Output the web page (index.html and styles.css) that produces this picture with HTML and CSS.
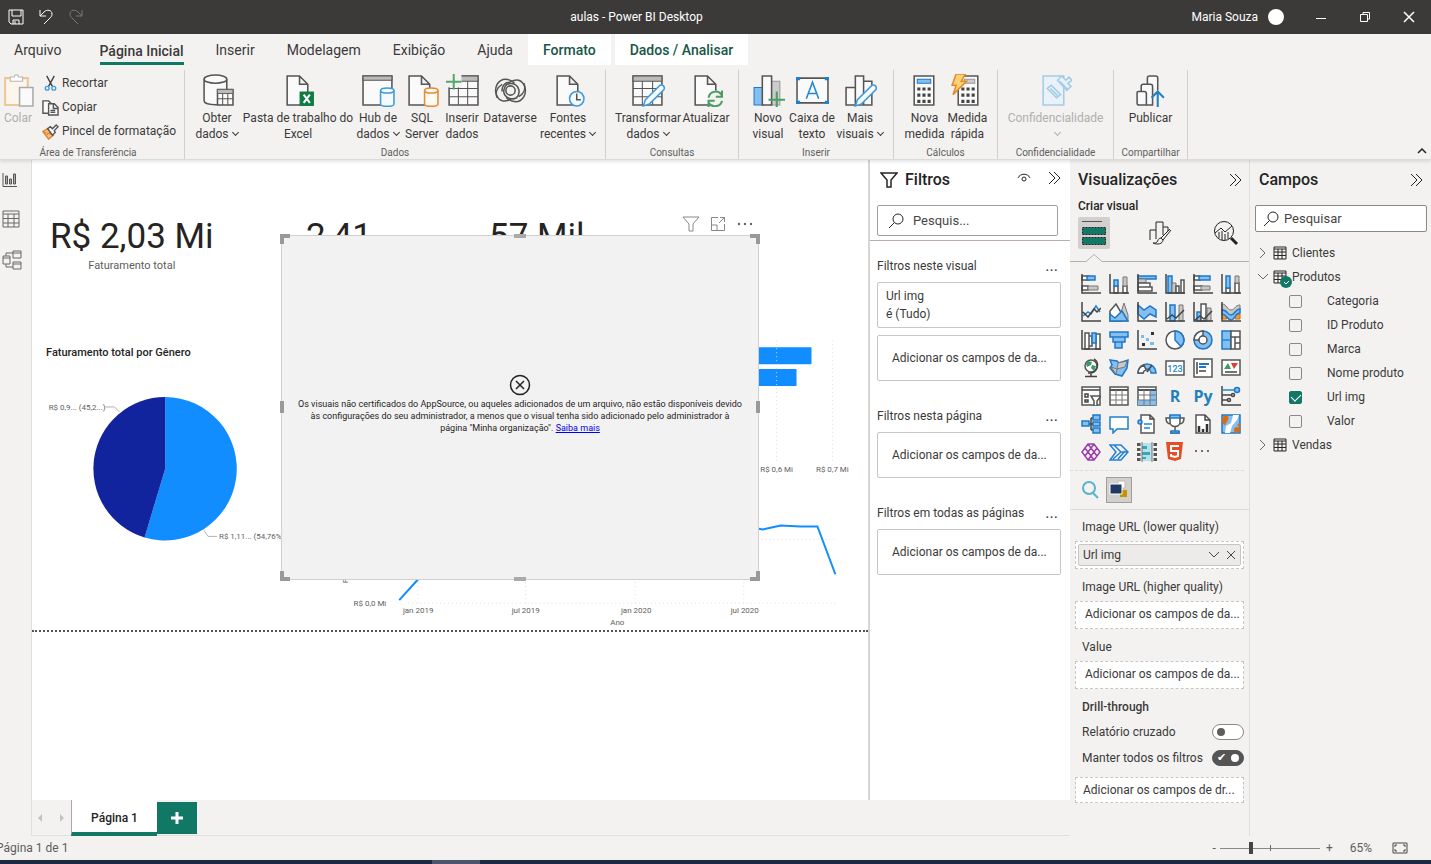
FILE: index.html
```html
<!DOCTYPE html>
<html lang="pt-BR">
<head>
<meta charset="utf-8">
<title>aulas - Power BI Desktop</title>
<link rel="stylesheet" href="styles.css">
</head>
<body>
<div class="app">
  <header class="titlebar">
    <div class="quick">
      <button class="plain" aria-label="Salvar"><svg width="16" height="16" viewBox="0 0 16 16" class="line light"><path d="M1 1h14v14H3l-2-2zM4 1v6h9V1M5 15v-4h6v4M7 12v3"/></svg></button>
      <button class="plain" aria-label="Desfazer"><svg width="16" height="16" viewBox="0 0 16 16" class="line light"><path d="M2 1v6h6M2 7l4-4c3-3 8-2 8 2 0 2-1 3-2 4l-6 6"/></svg></button>
      <button class="plain" aria-label="Refazer"><svg width="16" height="16" viewBox="0 0 16 16" class="line dim"><path d="M14 1v6H8M14 7l-4-4C7 0 2 1 2 5c0 2 1 3 2 4l6 6"/></svg></button>
    </div>
    <h1 class="doc-title">aulas - Power BI Desktop</h1>
    <div class="account">
      <span>Maria Souza</span><span class="avatar"></span>
      <button class="plain" aria-label="Minimizar"><svg width="12" height="12" viewBox="0 0 12 12" class="line light"><path d="M1 7.500h10"/></svg></button>
      <button class="plain" aria-label="Restaurar"><svg width="12" height="12" viewBox="0 0 12 12" class="line light"><path d="M1.500 3.500h7v7h-7zM4 3.500v-2h6.500v6.500h-2"/></svg></button>
      <button class="plain" aria-label="Fechar"><svg width="12" height="12" viewBox="0 0 12 12" class="line light"><path d="M1 1l10 10M11 1L1 11" stroke-width="1.500"/></svg></button>
    </div>
  </header>

  <nav class="tabs">
    <button class="tab">Arquivo</button>
    <button class="tab current"><span>Página Inicial</span></button>
    <button class="tab">Inserir</button>
    <button class="tab">Modelagem</button>
    <button class="tab">Exibição</button>
    <button class="tab">Ajuda</button>
    <button class="tab context format">Formato</button>
    <button class="tab context data">Dados / Analisar</button>
  </nav>

  <section class="ribbon">
    <div class="group clip">
      <div class="tools">
        <button class="tool off"><svg viewBox="0 0 32 32"><path d="M3 4h22v26H3z" fill="#fdf6ec" stroke="#edc896" stroke-width="2"/><path d="M8 7V3h4c0-3 4-3 4 0h4v4z" fill="#fff" stroke="#b5b5b5"/><path d="M17 13h13v18H17z" fill="#fafafa" stroke="#aaa" stroke-width="1.500"/></svg><span>Colar</span></button>
        <div class="small-tools">
          <button><svg viewBox="0 0 18 18"><path d="M5 1l6 11M13 1L7 12" stroke="#444" fill="none" stroke-width="1.500"/><circle cx="5.500" cy="14" r="2" class="bl"/><circle cx="12.500" cy="14" r="2" class="bl"/></svg>Recortar</button>
          <button><svg viewBox="0 0 18 18"><path d="M7 15H1V2h6l3 3M7 5h6l4 4v8H7zM12 5v5h5M9 12h5M9 14h5" class="ol"/></svg>Copiar</button>
          <button><svg viewBox="0 0 18 18"><path d="M1 9l6 8 5-4-6-7z" fill="#f6bd78" stroke="#e08124" stroke-width="1.500"/><path d="M2 10l9 2M5 13l4-4" stroke="#e08124"/><path d="M6 6l3-2 2 2 4-4 2 2-4 4 1 2-3 3z" class="ol"/></svg>Pincel de formatação</button>
        </div>
      </div>
      <h2>Área de Transferência</h2>
    </div>
    <div class="group dados">
      <div class="tools">
        <button class="tool"><svg viewBox="0 0 32 32"><path d="M3 5v21c0 5 22 5 22 0V5" class="ol"/><ellipse cx="14" cy="5" rx="11" ry="4" class="ol"/><path d="M16 15h15v15H16z" class="ol"/><path d="M16 15h15v4H16z" fill="#bbb" stroke="#666"/><path d="M16 24h15M21 19v11M26 19v11" class="ol thin"/></svg><span>Obter<br>dados<i class="chev"></i></span></button>
        <button class="tool"><svg viewBox="0 0 32 32"><path d="M5 2h12l8 8v20H5zM17 2v8h8" class="ol"/><path d="M17 17h14v14H17z" fill="#107c41"/><path d="M21 20l6 8M27 20l-6 8" stroke="#fff" stroke-width="2"/></svg><span>Pasta de trabalho do<br>Excel</span></button>
        <button class="tool"><svg viewBox="0 0 32 32"><path d="M1 2h28v28H1z" class="ol"/><path d="M1 2h28v4H1z" fill="#bbb" stroke="#555"/><path d="M18 16v13c0 3 13 3 13 0V16" class="bl"/><ellipse cx="24.500" cy="16" rx="6.500" ry="2.500" class="bl"/></svg><span>Hub de<br>dados<i class="chev"></i></span></button>
        <button class="tool"><svg viewBox="0 0 32 32"><path d="M3 2h12l8 8v20H3zM15 2v8h8" class="ol"/><path d="M18 16v13c0 3 13 3 13 0V16" class="or"/><ellipse cx="24.500" cy="16" rx="6.500" ry="2.500" class="or"/></svg><span>SQL<br>Server</span></button>
        <button class="tool"><svg viewBox="0 0 32 32"><path d="M3 2h28v28H3z" class="ol"/><path d="M3 2h28v5H3z" fill="#bbb" stroke="#555"/><path d="M3 14h28M3 22h28M12 7v23M21 7v23" class="ol thin"/><path d="M0 0h15v13H0z" fill="#f3f2f1"/><path d="M7.500 0v15M0 7.500h15" stroke="#55a86c" stroke-width="2"/></svg><span>Inserir<br>dados</span></button>
        <button class="tool"><svg viewBox="0 0 32 32" fill="none" stroke="#555" stroke-width="1.500"><path d="M20 9C15 4 7 3 3 10c-3 6-1 14 5 16 4 1 7-1 9-2 6 1 8-5 7-9-2-7-12-8-14-1-2 5 2 10 7 10"/><path d="M12 23c5 5 13 6 17-1 3-6 1-14-5-16-4-1-7 1-9 2-5 0-8 5-7 9"/><circle cx="16" cy="16" r="4.500"/><path d="M29 9c2 5 0 10-5 13M3 23c-2-5 0-10 5-13"/></svg><span>Dataverse</span></button>
        <button class="tool"><svg viewBox="0 0 32 32"><path d="M5 2h12l8 8v20H5zM17 2v8h8" class="ol"/><circle cx="24" cy="24" r="7" class="bl"/><path d="M24 19v6h4" class="ol"/></svg><span>Fontes<br>recentes<i class="chev"></i></span></button>
      </div>
      <h2>Dados</h2>
    </div>
    <div class="group consultas">
      <div class="tools">
        <button class="tool"><svg viewBox="0 0 32 32"><path d="M1 2h28v28H1z" class="ol"/><path d="M1 2h28v5H1z" fill="#bbb" stroke="#555"/><path d="M1 14h28M1 22h28M10 7v23M20 7v23" class="ol thin"/><path d="M11 31l2-6 14-14c3-1 5 1 4 4L17 29z" class="bl"/></svg><span>Transformar<br>dados<i class="chev"></i></span></button>
        <button class="tool"><svg viewBox="0 0 32 32"><path d="M5 2h12l8 8v20H5zM17 2v8h8" class="ol"/><circle cx="25" cy="24" r="8" fill="#f3f2f1"/><path d="M18 23c1-7 10-8 13-2M31 16v6h-6M31 26c-1 6-10 7-13 2M18 32v-6h6" fill="none" stroke="#4b9e61" stroke-width="2"/></svg><span>Atualizar</span></button>
      </div>
      <h2>Consultas</h2>
    </div>
    <div class="group inserir">
      <div class="tools">
        <button class="tool"><svg viewBox="0 0 32 32"><path d="M2 13h9v17H2z" class="bf"/><path d="M18 7h9v23h-9z" fill="#ccc" stroke="#999"/><path d="M10 2h9v28h-9z" class="ol"/><path d="M16 25h16M24 17v15" stroke="#4b9e61" stroke-width="2"/></svg><span>Novo<br>visual</span></button>
        <button class="tool"><svg viewBox="0 0 32 32"><path d="M1 4h30v24H1z" class="ol"/><path d="M0 3h4v3H0zM28 3h4v3h-4zM0 26h4v3H0zM28 26h4v3h-4z" fill="#1683cf"/><path d="M10 24l6-16 6 16M12 19h8" fill="none" stroke="#2189d2" stroke-width="1.500"/></svg><span>Caixa de<br>texto</span></button>
        <button class="tool"><svg viewBox="0 0 32 32"><path d="M2 13h9v17H2zM19 7h8v23h-8zM11 2h8v28h-8z" class="ol"/><path d="M11 31l2-6 14-14c3-1 5 1 4 4L17 29z" class="bl"/></svg><span>Mais<br>visuais<i class="chev"></i></span></button>
      </div>
      <h2>Inserir</h2>
    </div>
    <div class="group calculos">
      <div class="tools">
        <button class="tool"><svg viewBox="0 0 32 32"><path d="M6 2h19v28H6z" class="ol"/><path d="M9 5h13v4H9z" class="bf"/><path d="M9 14.500h13M9 20.500h13M9 26.500h13" stroke="#444" stroke-width="3" stroke-dasharray="3 2"/></svg><span>Nova<br>medida</span></button>
        <button class="tool"><svg viewBox="0 0 32 32"><path d="M7 2h19v28H7z" class="ol"/><path d="M13 5h10v4H13z" fill="#ccc" stroke="#999"/><path d="M10 14.500h13M10 20.500h13M10 26.500h13" stroke="#444" stroke-width="3" stroke-dasharray="3 2"/><path d="M5 0h9l-4 7h5L2 20l3-9H1z" fill="#fbd277" stroke="#e48a26" stroke-width="1.500"/></svg><span>Medida<br>rápida</span></button>
      </div>
      <h2>Cálculos</h2>
    </div>
    <div class="group confid">
      <div class="tools">
        <button class="tool off"><svg viewBox="0 0 32 32" fill="#e9f2f8" stroke="#a4cce4" stroke-width="1.500"><path d="M4 2h20v28H4z"/><path d="M8 14l4-3 9 9-4 3zM11 14l7 7M18 6l4-4 4 4 3-3 3 3-4 3 3 3-4 4zM20 7l8 8"/></svg><span>Confidencialidade<br><i class="chev"></i></span></button>
      </div>
      <h2>Confidencialidade</h2>
    </div>
    <div class="group compart">
      <div class="tools">
        <button class="tool"><svg viewBox="0 0 32 32"><path d="M3 18q0-1 1-1h6q2 0 2 2v11H5q-2 0-2-2zM7 17v-5q0-2 2-2h7q2 0 2 2v18h-6M13 10V4q0-2 2-2h6q2 0 2 2v12" class="ol"/><path d="M23 32V17M17 23l6-6 6 6" fill="none" stroke="#2380bd" stroke-width="2"/></svg><span>Publicar</span></button>
      </div>
      <h2>Compartilhar</h2>
    </div>
    <button class="plain collapse" aria-label="Recolher faixa de opções"><svg width="10" height="6" viewBox="0 0 10 6" class="line dark"><path d="M1 5l4-4 4 4" stroke-width="1.500"/></svg></button>
  </section>

  <main class="work">
    <nav class="rail">
      <button class="plain" aria-label="Relatório"><svg width="16" height="16" viewBox="0 0 16 16" fill="#aaa" stroke="#555"><path d="M1 1v13.500h14" fill="none"/><path d="M3.500 4h2v8h-2zM7.500 7h2v5h-2zM11.500 2h2v10h-2z"/></svg></button>
      <button class="plain" aria-label="Dados"><svg width="18" height="18" viewBox="0 0 18 18" class="line gray"><path d="M1 1h16v16H1zM1 4h16M1 8.500h16M1 13h16M6 4v13M12 4v13"/></svg></button>
      <button class="plain" aria-label="Modelo"><svg width="20" height="20" viewBox="0 0 20 20" class="line gray"><path d="M11 1h8v7h-8zM11 3h8M11 12h8v7h-8zM11 14h8M1 6h7v8H1zM1 8h7M4 6V3h7M4 14v3h7"/></svg></button>
    </nav>

    <div class="report">
      <div class="canvas">
        <div class="card revenue"><strong>R$ 2,03 Mi</strong><span>Faturamento total</span></div>
        <div class="card average"><strong>2,41</strong></div>
        <div class="card units"><strong>57 Mil</strong></div>
        <h3 class="chart-title">Faturamento total por Gênero</h3>
        <svg class="charts" width="836" height="472" viewBox="0 -1 836 472">
          <path d="M132 237a72 72 0 1 1-20.700 141L132 309z" fill="#118dff"/>
          <path d="M111.300 378A72 72 0 0 1 132 237v72z" fill="#12239e"/>
          <path d="M72 247h9l5 5M171 371l4 6h9" class="leader"/>
          <text x="15" y="250">R$ 0,9... (45,2...)</text>
          <text x="186" y="380">R$ 1,11... (54,76%)</text>
          <path d="M726 187h55v17h-55zM726 209h40v17h-40z" fill="#118dff"/>
          <path d="M746 180v123M802 180v123M376 444h432M386 419v26M494 419v26M604 419v26M713 419v26M727 380h80" class="dots"/>
          <text x="746" y="312" class="mid">R$ 0,6 Mi</text>
          <text x="802" y="312" class="mid">R$ 0,7 Mi</text>
          <path d="M367 441l19-21 7-2M727 369l5 1 18-4 20 1h17l18 48" fill="none" stroke="#118dff" stroke-width="2"/>
          <text x="354" y="447" class="end">R$ 0,0 Mi</text>
          <text x="386" y="454" class="mid">jan 2019</text>
          <text x="494" y="454" class="mid">jul 2019</text>
          <text x="605" y="454" class="mid">jan 2020</text>
          <text x="714" y="454" class="mid">jul 2020</text>
          <text x="586" y="466" class="mid">Ano</text>
          <text transform="translate(316 424) rotate(-90)">Faturamento total</text>
        </svg>
        <div class="visual-actions">
          <button class="plain" aria-label="Filtros"><svg width="18" height="18" viewBox="0 0 18 18" class="line mist"><path d="M1 2h16l-6 7v7H7V9z"/></svg></button>
          <button class="plain" aria-label="Modo de foco"><svg width="16" height="16" viewBox="0 0 16 16" class="line mist"><path d="M8 1.500H1.500v13h13V8M1.500 9H7v5.500M10 1.500h4.500V6M14.500 1.500L9 7"/></svg></button>
          <button class="plain" aria-label="Mais opções"><svg width="18" height="4" viewBox="0 0 18 4" fill="#666"><circle cx="3" cy="2" r="1.200"/><circle cx="9" cy="2" r="1.200"/><circle cx="15" cy="2" r="1.200"/></svg></button>
        </div>
        <div class="blocked">
          <i class="grip nw"></i><i class="grip n"></i><i class="grip ne"></i><i class="grip w"></i><i class="grip e"></i><i class="grip sw"></i><i class="grip s"></i><i class="grip se"></i>
          <svg width="22" height="22" viewBox="0 0 22 22" fill="none" stroke="#222" stroke-width="1.500"><circle cx="11" cy="11" r="9.500"/><path d="M7 7l8 8M15 7l-8 8"/></svg>
          <p>Os visuais não certificados do AppSource, ou aqueles adicionados de um arquivo, não estão disponíveis devido<br>às configurações do seu administrador, a menos que o visual tenha sido adicionado pelo administrador à<br>página "Minha organização". <a href="#">Saiba mais</a></p>
        </div>
      </div>

      <aside class="filters">
        <header><svg width="18" height="18" viewBox="0 0 18 18" fill="none" stroke="#252423" stroke-width="1.500"><path d="M1 2h16l-6 7v7H7V9z"/></svg><h2>Filtros</h2>
          <button class="plain eye" aria-label="Ocultar painel"><svg width="14" height="10" viewBox="0 0 14 10" class="line dark"><path d="M1 5c2-5 10-5 12 0"/><circle cx="7" cy="6" r="2"/></svg></button>
          <button class="plain" aria-label="Recolher filtros"><svg width="14" height="14" viewBox="0 0 14 14" class="line dark"><path d="M2 1l6 6-6 6M7 1l6 6-6 6"/></svg></button></header>
        <label class="search"><svg width="16" height="16" viewBox="0 0 16 16" class="line dark"><circle cx="10" cy="6" r="5"/><path d="M6.500 9.500L1 15"/></svg><input type="text" placeholder="Pesquis..." aria-label="Pesquisar filtros"></label>
        <hr>
        <section><h3>Filtros neste visual <button class="plain">...</button></h3>
          <div class="box named">Url img<br>é (Tudo)</div>
          <div class="box">Adicionar os campos de da...</div></section>
        <section><h3>Filtros nesta página <button class="plain">...</button></h3>
          <div class="box">Adicionar os campos de da...</div></section>
        <section><h3>Filtros em todas as páginas <button class="plain">...</button></h3>
          <div class="box">Adicionar os campos de da...</div></section>
      </aside>

      <footer class="pages">
        <button class="plain arrow" aria-label="Página anterior"><svg width="6" height="8" viewBox="0 0 6 8" fill="#c4c2c0"><path d="M5 0v8L1 4z"/></svg></button>
        <button class="plain arrow" aria-label="Próxima página"><svg width="6" height="8" viewBox="0 0 6 8" fill="#c4c2c0"><path d="M1 0v8l4-4z"/></svg></button>
        <button class="page">Página 1</button>
        <button class="add" aria-label="Nova página"><svg width="12" height="12" viewBox="0 0 12 12" stroke="#fff" stroke-width="3"><path d="M6 0v12M0 6h12"/></svg></button>
      </footer>
    </div>

    <aside class="visuals">
      <header><h2>Visualizações</h2><button class="plain" aria-label="Recolher visualizações"><svg width="14" height="14" viewBox="0 0 14 14" class="line dark"><path d="M2 1l6 6-6 6M7 1l6 6-6 6"/></svg></button></header>
      <h3 class="build">Criar visual</h3>
      <div class="modes">
        <button class="mode on" aria-label="Criar visual"><svg width="26" height="26" viewBox="0 0 26 26"><path d="M1 1.500h20" stroke="#555"/><path d="M1.500 7.500h23v7h-23zM1.500 17.500h23v7h-23z" fill="#117865" stroke="#222" stroke-dasharray="2 1"/></svg></button>
        <button class="mode" aria-label="Formatar visual"><svg width="24" height="24" viewBox="0 0 24 24" class="line dark"><path d="M2 19V9h6V1h7v13M8 9v9M15 6h5v4M22 8l-9 9M23 9l-8 10M13 17c-3 0-3 3-4 4-1 1-2 1-4 1 4 2 10 1 10-3z"/></svg></button>
        <button class="mode" aria-label="Análise"><svg width="26" height="26" viewBox="0 0 26 26" class="line dark"><circle cx="11" cy="11" r="9.500"/><path d="M2 13l6-5 4 4 7-6M6 12v6M9 11v9M12 14v6M15 12v7"/><path d="M18 18l6 6" stroke-width="3"/></svg></button>
      </div>
      <svg class="notch" width="180" height="10" viewBox="0 0 180 10" fill="none" stroke="#b3b0ad"><path d="M0 8.500h16l8-7 8 7h148"/></svg>
      <div class="gallery">
        <button><svg viewBox="0 0 20 20"><path d="M1 2h7v4H1zM1 12h6v4H1z" class="w"/><path d="M6 2h8v4H6z" class="b"/><path d="M7 12h10v4H7z" class="g"/><path d="M1 0v19h19" class="k"/></svg></button>
        <button><svg viewBox="0 0 20 20"><path d="M5 12h4v7H5zM14 12h4v7h-4z" class="w"/><path d="M5 6h4v6H5z" class="b"/><path d="M14 3h4v9h-4z" class="g"/><path d="M1 0v19h19" class="k"/></svg></button>
        <button><svg viewBox="0 0 20 20"><path d="M1 2h18v3H1z" class="b"/><path d="M1 5h8v4H1z" class="g"/><path d="M1 9h12v4H1zM1 13h14v4H1z" class="w"/><path d="M1 0v19h19" class="k"/></svg></button>
        <button><svg viewBox="0 0 20 20"><path d="M3 2h4v17H3z" class="b"/><path d="M7 9h4v10H7z" class="g"/><path d="M11 12h3v7h-3zM16 6h3v13h-3z" class="w"/><path d="M1 0v19h19" class="k"/></svg></button>
        <button><svg viewBox="0 0 20 20"><path d="M1 2h6v4H1zM1 12h8v4H1z" class="w"/><path d="M6 2h11v4H6z" class="b"/><path d="M8 12h9v4H8z" class="g"/><path d="M1 0v19h19" class="k"/></svg></button>
        <button><svg viewBox="0 0 20 20"><path d="M5 14h4v5H5zM14 9h4v10h-4z" class="w"/><path d="M5 2h4v12H5z" class="b"/><path d="M14 2h4v7h-4z" class="g"/><path d="M1 0v19h19" class="k"/></svg></button>

        <button><svg viewBox="0 0 20 20"><path d="M2 14l5-4 3 2 5-8 4 6" class="bs"/><path d="M2 10l5 5 6-8 3 3 4-4M1 0v19h19" class="k"/></svg></button>
        <button><svg viewBox="0 0 20 20"><path d="M9 19l6-18 4 12v6z" class="g"/><path d="M1 9l6-7 6 10v7H1z" class="w"/><path d="M1 12l5 4 7-7 6 10H1z" class="b"/></svg></button>
        <button><svg viewBox="0 0 20 20"><path d="M1 3l6 5 6-4 6 4v7l-6-3-6 5-6-5z" class="b"/><path d="M1 0v19h19" class="k"/></svg></button>
        <button><svg viewBox="0 0 20 20"><path d="M5 3h5v16H5z" class="b"/><path d="M14 3h4v16h-4z" class="g"/><path d="M2 17l5-4 4 3 8-8M1 0v19h19" class="k"/></svg></button>
        <button><svg viewBox="0 0 20 20"><path d="M4 10h4v9H4z" class="b"/><path d="M8 2h5v17H8z" class="w"/><path d="M14 6h4v13h-4z" class="g"/><path d="M2 18l5-4 4 3 8-8M1 0v19h19" class="k"/></svg></button>
        <button><svg viewBox="0 0 20 20"><path d="M1 2c5 0 5 6 9 6s4-5 9-5v5c-5 0-5 6-9 6s-4-6-9-6z" class="g"/><path d="M1 12h5v5H1zM14 12h5v5h-5z" fill="#f39a31" stroke="#c96b12"/><path d="M1 8c6 0 5 5 9 5s4-6 9-6v4c-5 0-5 7-9 7s-4-6-9-6z" class="b"/><path d="M1 0v19h19" class="k"/></svg></button>

        <button><svg viewBox="0 0 20 20"><path d="M4 3h4v16H4zM15 4h4v15h-4zM8 6h3v10H8z" class="w"/><path d="M11 3h4v10h-4z" class="b"/><path d="M1 0v19h19" class="k"/></svg></button>
        <button><svg viewBox="0 0 20 20"><path d="M1 2h18v5H1zM4 7h12v5H4zM6 12h7v6H6z" class="b"/></svg></button>
        <button><svg viewBox="0 0 20 20"><path d="M4 5h3v3H4zM13 12h4v3h-4zM9 8h3v3H9z" fill="#7bbcf0"/><path d="M14 2h3v3h-3zM5 13h3v3H5z" fill="#333"/><path d="M1 0v19h19" class="k"/></svg></button>
        <button><svg viewBox="0 0 20 20"><circle cx="10" cy="10" r="9" class="w"/><path d="M10 1a9 9 0 0 1 6 15.500L10 10z" class="b"/></svg></button>
        <button><svg viewBox="0 0 20 20"><circle cx="10" cy="10" r="9" class="b"/><path d="M1 10a9 9 0 0 1 9-9v5a4 4 0 0 0-4 4z" class="w"/><circle cx="10" cy="10" r="4" class="w"/></svg></button>
        <button><svg viewBox="0 0 20 20"><path d="M1 1h9v18H1z" class="b"/><path d="M10 1h9v18h-9zM10 7h9M14 7v12M14 13h5" class="w"/><path d="M1 10h9" class="bs"/></svg></button>

        <button><svg viewBox="0 0 20 20"><circle cx="10" cy="8" r="6" class="w"/><path d="M7 3l4 1-1 3-4 2-1-3zM11 7l4 1-2 5-3-3z" fill="#3a9b61"/><path d="M13 1c7 4 3 15-6 14M10 15v3M4 18.500h12" class="k"/></svg></button>
        <button><svg viewBox="0 0 20 20"><path d="M1 2l7 1 2 2 9-3-1 8-5 8-7-2-5-6 2-3z" class="b"/><path d="M9 5l9-2-2 6-8 2zM2 9l6 2-1 5z" class="g"/></svg></button>
        <button><svg viewBox="0 0 20 20"><path d="M1 15a9 9 0 0 1 18 0h-5a4 4 0 0 0-8 0z" class="b"/><path d="M1 15a9 9 0 0 1 6-8l2 5a4 4 0 0 0-3 3z" class="w"/><path d="M10 14l5-7" class="k"/></svg></button>
        <button><svg viewBox="0 0 20 20"><path d="M1 3h18v14H1z" class="w"/><text x="10" y="14" class="num">123</text></svg></button>
        <button><svg viewBox="0 0 20 20"><path d="M1 1h18v18H1z" class="w"/><path d="M4 4v12M6 13h7" class="k"/><path d="M6 6h10M6 9h7" stroke="#1e78c8" stroke-width="2"/></svg></button>
        <button><svg viewBox="0 0 20 20"><path d="M1 2h18v15H1z" class="w"/><path d="M3 11l4-6 3 6z" fill="#3a9b61"/><path d="M10 5h7l-4 6z" fill="#e23b2e"/><path d="M4 14h12" class="k"/></svg></button>

        <button><svg viewBox="0 0 20 20"><path d="M1 1h18v18H1z" class="w"/><path d="M1 4h18M4 8h3v3H4zM4 14h3v2H4z" class="k"/><path d="M10 10h10l-4 5v5h-3v-5z" class="w"/></svg></button>
        <button><svg viewBox="0 0 20 20"><path d="M1 1h18v18H1z" class="w"/><path d="M1 4h18" stroke="#555" stroke-width="2"/><path d="M1 9h18M1 14h18M7 4v15M13 4v15" class="k1"/></svg></button>
        <button><svg viewBox="0 0 20 20"><path d="M1 1h18v18H1z" class="w"/><path d="M13 5h6v14H1v-5h12z" fill="#83bff0"/><path d="M1 4h18" stroke="#555" stroke-width="2"/><path d="M1 9h18M1 14h18M7 4v15M13 4v15" class="k1"/></svg></button>
        <button class="letter">R</button>
        <button class="letter">Py</button>
        <button><svg viewBox="0 0 20 20"><path d="M1 0v19h19M1 9h9M1 14h5" class="k"/><path d="M1 4h13" class="bs"/><circle cx="16" cy="4" r="2.500" class="b"/><circle cx="12" cy="9" r="1.500" class="k"/><circle cx="8" cy="14" r="1.500" class="k"/></svg></button>

        <button><svg viewBox="0 0 20 20"><path d="M8 10h4M10 4h3M10 16h3M10 4v12" class="k"/><path d="M1 7h7v5H1zM12 1h7v5h-7zM12 8h7v4h-7zM12 14h7v5h-7z" class="b"/></svg></button>
        <button><svg viewBox="0 0 20 20"><path d="M1 3h18v12H8l-4 4v-4H1z" fill="#fff" stroke="#2380c8" stroke-width="1.500"/></svg></button>
        <button><svg viewBox="0 0 20 20"><path d="M4 1h9l4 4v14H4z" class="w"/><path d="M13 1v4h4" class="k"/><path d="M7 10h8M7 14h6" class="bs"/><circle cx="3" cy="8" r="2" class="b"/></svg></button>
        <button><svg viewBox="0 0 20 20"><path d="M5 2h10v6c0 6-10 6-10 0zM5 4H1c0 5 2 6 5 6M15 4h4c0 5-2 6-5 6M10 13v4M6 18h8v1H6z" class="w"/><path d="M5 1h10v3H5zM6 17h8v2H6z" class="b"/></svg></button>
        <button><svg viewBox="0 0 20 20"><path d="M3 1h9l5 5v13H3z" class="w"/><path d="M12 1v5h5" class="k"/><path d="M6 12v6M10 15v3M14 10v8" stroke="#333" stroke-width="2.500"/></svg></button>
        <button><svg viewBox="0 0 20 20"><path d="M1 1h18v18H1z" class="b"/><path d="M12 1h6l-2 5-5 6-2 7H4l1-7 5-3z" fill="#fff"/><path d="M3 11C-4 1 10-2 7 6L4 11z" fill="#dd6b10"/><circle cx="16" cy="16" r="3" fill="#dd6b10"/><circle cx="18" cy="11" r="1.500" fill="#dd6b10"/></svg></button>

        <button><svg viewBox="0 0 20 20" fill="none" stroke="#9a3fa8" stroke-width="1.500"><path d="M1 10l6-8h6l6 8-6 8H7zM7 2l6 8-6 8M13 2L7 10l6 8M4 6l3 4-3 4M16 6l-3 4 3 4"/></svg></button>
        <button><svg viewBox="0 0 20 20" fill="none" stroke="#2380d8" stroke-width="1.500"><path d="M1 3h11l7 7-7 8H1l6-8zM5 3l7 7h7M4 17l8-7M9 17l7-8"/></svg></button>
        <button><svg viewBox="0 0 20 20"><path d="M1 1v18M19 1v18" stroke="#555" stroke-width="5" stroke-dasharray="3 2"/><path d="M5 1h10v18H5z" fill="#b7e0e8"/><path d="M5 4h5v3H5zM5 10h8v3H5zM5 15h4v2H5z" fill="#35a7bd"/><path d="M5 0v20M15 0v20" class="k1"/></svg></button>
        <button><svg viewBox="0 0 20 20"><path d="M1 0h17l-2 17-6 2-7-2z" fill="#e44d26"/><path d="M14 4H6v5h7v5l-3 1-4-1v-2" fill="none" stroke="#fff" stroke-width="2"/></svg></button>
        <button><svg viewBox="0 0 20 20" fill="#444"><circle cx="3" cy="9" r="1"/><circle cx="9" cy="9" r="1"/><circle cx="15" cy="9" r="1"/></svg></button>
      </div>
      <div class="custom">
        <button><svg width="18" height="18" viewBox="0 0 18 18" fill="none" stroke="#56b4ce" stroke-width="2"><circle cx="8" cy="7" r="6"/><path d="M12 12l5 5"/></svg></button>
        <button class="picked"><svg width="20" height="20" viewBox="0 0 20 20"><path d="M9 1h7v7H9z" fill="#fff" stroke="#bbb"/><path d="M12 10h6v7h-7v-3z" fill="#c39400"/><path d="M1 4h12v10H1z" fill="#1f3864" stroke="#fff"/></svg></button>
      </div>
      <div class="wells">
        <h4>Image URL (lower quality)</h4>
        <div class="well"><div class="chip"><span>Url img</span><button class="plain" aria-label="Opções do campo"><svg width="12" height="8" viewBox="0 0 12 8" class="line"><path d="M1 1l5 5 5-5"/></svg></button><button class="plain" aria-label="Remover campo"><svg width="10" height="10" viewBox="0 0 10 10" class="line"><path d="M1 1l8 8M9 1L1 9"/></svg></button></div></div>
        <h4>Image URL (higher quality)</h4>
        <div class="well">Adicionar os campos de da...</div>
        <h4>Value</h4>
        <div class="well">Adicionar os campos de da...</div>
        <h4 class="strong">Drill-through</h4>
        <label class="switch">Relatório cruzado<input type="checkbox"></label>
        <label class="switch">Manter todos os filtros<input type="checkbox" checked></label>
        <div class="well last">Adicionar os campos de dr...</div>
      </div>
    </aside>

    <aside class="fields">
      <header><h2>Campos</h2><button class="plain" aria-label="Recolher campos"><svg width="14" height="14" viewBox="0 0 14 14" class="line dark"><path d="M2 1l6 6-6 6M7 1l6 6-6 6"/></svg></button></header>
      <label class="search"><svg width="16" height="16" viewBox="0 0 16 16" class="line dark"><circle cx="10" cy="6" r="5"/><path d="M6.500 9.500L1 15"/></svg><input type="text" placeholder="Pesquisar" aria-label="Pesquisar campos"></label>
      <ul>
        <li class="table"><svg width="10" height="12" viewBox="0 0 10 12" class="line gray"><path d="M2 1l5 5-5 5"/></svg><svg width="14" height="14" viewBox="0 0 14 14" class="line dark"><path d="M1 1h12v12H1zM1 3h12M1 6h12M1 9.500h12M5 3v10M9 3v10"/></svg>Clientes</li>
        <li class="table"><svg width="10" height="12" viewBox="0 0 10 12" class="line gray"><path d="M0 3l5 5 5-5"/></svg><span class="marked"><svg width="14" height="14" viewBox="0 0 14 14" class="line dark"><path d="M1 1h12v12H1zM1 3h12M1 6h12M1 9.500h12M5 3v10M9 3v10"/></svg><svg class="badge" width="12" height="12" viewBox="0 0 12 12"><circle cx="6" cy="6" r="6" fill="#117865"/><path d="M4 6l2 2 3-3" fill="none" stroke="#fff"/></svg></span>Produtos</li>
        <li><label><input type="checkbox">Categoria</label></li>
        <li><label><input type="checkbox">ID Produto</label></li>
        <li><label><input type="checkbox">Marca</label></li>
        <li><label><input type="checkbox">Nome produto</label></li>
        <li><label><input type="checkbox" checked>Url img</label></li>
        <li><label><input type="checkbox">Valor</label></li>
        <li class="table"><svg width="10" height="12" viewBox="0 0 10 12" class="line gray"><path d="M2 1l5 5-5 5"/></svg><svg width="14" height="14" viewBox="0 0 14 14" class="line dark"><path d="M1 1h12v12H1zM1 3h12M1 6h12M1 9.500h12M5 3v10M9 3v10"/></svg>Vendas</li>
      </ul>
    </aside>
  </main>

  <footer class="status">
    <span class="count">Página 1 de 1</span>
    <div class="zoom"><button class="plain">-</button><input type="range" min="0" max="100" value="30" aria-label="Zoom"><button class="plain">+</button><span class="percent">65%</span>
      <button class="plain" aria-label="Ajustar à página"><svg width="16" height="12" viewBox="0 0 16 12" class="line"><path d="M1 1h14v10H1zM3 5V3h2M11 3h2v2M13 7v2h-2M5 9H3V7"/></svg></button></div>
  </footer>
  <div class="taskbar"><span></span></div>
</div>
</body>
</html>
```

FILE: styles.css
```css
* { box-sizing: border-box; }
body { margin: 0; background: #f3f2f1; color: #3b3a39; font: 12px/16px Roboto, "Open Sans", sans-serif; }
button, input { font: inherit; color: inherit; }
button { border: 0; background: none; padding: 0; white-space: nowrap; }
h1, h2, h3, h4, p, ul { margin: 0; padding: 0; font-size: 12px; font-weight: 400; list-style: none; }
svg { display: block; flex: none; }
.plain { display: flex; align-items: center; justify-content: center; }
.line { fill: none; stroke: #484644; }
.line.dark { stroke: #252423; }
.line.light { stroke: #fff; }
.line.dim { stroke: #777; }
.line.gray { stroke: #6b6967; }
.line.mist { stroke: #888; }

.app { height: 100vh; display: flex; flex-direction: column; overflow: hidden; }

.titlebar { height: 34px; flex: none; display: grid; grid-template-columns: 1fr auto 1fr; align-items: center; padding: 0 16px 0 8px; background: #3b3a38; color: #fff; }
.quick { display: flex; gap: 14px; }
.doc-title { padding-right: 150px; }
.account { display: flex; align-items: center; justify-content: flex-end; }
.avatar { width: 16px; height: 16px; border-radius: 50%; background: #fff; margin: 0 31px 0 10px; }
.account .plain + .plain { margin-left: 32px; }

.tabs { height: 31px; flex: none; display: flex; font-size: 14px; line-height: 20px; padding-left: 14px; }
.tab { height: 31px; margin-right: 32px; }
.tab.current { font-weight: 500; margin-left: 6px; }
.tab.current span { display: block; height: 30px; padding-top: 6px; border-bottom: 3px solid #117865; }
.tab.context { background: #fff; color: #185647; font-weight: 500; padding: 0 15px; margin: 0 4px 0 0; }
.tab.format { margin-left: -17px; }

.ribbon { height: 95px; flex: none; display: flex; padding-top: 5px; position: relative; z-index: 1; border-bottom: 1px solid #dddbd9; box-shadow: 0 2px 3px #00000018; }
.group { height: 89px; flex: none; display: flex; flex-direction: column; justify-content: space-between; border-right: 1px solid #d2d0ce; }
.group h2 { font-size: 10px; line-height: 12px; color: #605e5c; white-space: nowrap; display: flex; justify-content: center; }
.tools { display: grid; justify-content: center; align-items: start; }
.tool { display: flex; flex-direction: column; align-items: center; gap: 3px; padding-top: 4px; text-align: center; }
.tool svg { width: 33px; height: 33px; }
.tool.off { color: #b1afad; }
.chev { display: inline-block; width: 5px; height: 5px; border: solid; border-width: 0 1px 1px 0; transform: rotate(45deg); margin: 0 1px 3px 4px; border-color: currentColor; }
.clip { width: 185px; padding-right: 8px; }
.clip .tools { grid-template-columns: 36px 140px; }
.dados { width: 421px; }
.dados .tools { grid-template-columns: 50px 112px 48px 40px 40px 56px 60px; }
.consultas { width: 133px; }
.consultas .tools { grid-template-columns: 68px 48px; }
.inserir { width: 155px; }
.inserir .tools { grid-template-columns: 44px 44px 52px; }
.calculos { width: 104px; }
.calculos .tools { grid-template-columns: 44px 42px; }
.confid { width: 116px; }
.compart { width: 74px; }
.small-tools { display: grid; grid-auto-rows: 24px; padding: 1px 0 0 6px; }
.small-tools button { display: flex; align-items: center; gap: 3px; }
.small-tools svg { width: 17px; height: 17px; }
.collapse { margin: 75px 4px 0 auto; height: 12px; }
.ol { fill: #fafafa; stroke: #555; stroke-width: 1.5; }
.thin { stroke-width: 1; fill: none; }
.bl { fill: #f5faff; stroke: #3f9ad8; stroke-width: 1.5; }
.or { fill: #fffaf4; stroke: #e68a34; stroke-width: 1.5; }
.bf { fill: #83bff0; stroke: #1e78c8; stroke-width: 1; }

.work { flex: 1; min-height: 0; display: flex; }
.rail { width: 32px; flex: none; display: flex; flex-direction: column; align-items: flex-start; gap: 22px; padding: 12px 0 0 2px; border-right: 1px solid #e1dfdd; }
.report { flex: 1; min-width: 0; display: grid; grid-template-columns: 1fr 202px; grid-template-rows: 1fr 36px; }
.canvas { position: relative; overflow: hidden; background: #fff; }
.card { position: absolute; top: 56px; display: flex; flex-direction: column; align-items: center; color: #605e5c; font-size: 11px; }
.card strong { font: 400 35px/42px Roboto, sans-serif; color: #252423; white-space: nowrap; }
.revenue { left: 18px; }
.average { left: 274px; }
.units { left: 457px; }
.chart-title { position: absolute; left: 14px; top: 185px; font: 500 11px/16px Roboto, sans-serif; color: #252423; }
.charts { position: absolute; left: 0; top: 0; border-bottom: 2px dotted #555; }
.charts text { font: 8px Roboto, sans-serif; fill: #605e5c; }
.charts .mid { text-anchor: middle; }
.charts .end { text-anchor: end; }
.leader { fill: none; stroke: #b3b0ad; }
.dots { fill: none; stroke: #ddd; stroke-dasharray: 1 3; }
.visual-actions { position: absolute; left: 650px; top: 55px; display: flex; align-items: center; gap: 10px; }
.blocked { position: absolute; left: 249px; top: 75px; width: 478px; height: 345px; background: #f3f2f2; border: 1px solid #d0d0d0; display: flex; flex-direction: column; align-items: center; padding-top: 138px; text-align: center; color: #252423; }
.blocked p { font-size: 9px; line-height: 12px; white-space: nowrap; padding-top: 2px; }
.blocked a { color: #00e; }
.grip { position: absolute; width: 10px; height: 10px; border: 0 solid #999; }
.nw { left: -2px; top: -2px; border-width: 4px 0 0 4px; }
.ne { right: -2px; top: -2px; border-width: 4px 4px 0 0; }
.sw { left: -2px; bottom: -2px; border-width: 0 0 4px 4px; }
.se { right: -2px; bottom: -2px; border-width: 0 4px 4px 0; }
.n, .s { left: 232px; width: 12px; height: 4px; background: #aaa; }
.w.grip, .e { top: 165px; width: 4px; height: 12px; background: #999; }
.n { top: -2px; }
.s { bottom: -2px; }
.w.grip { left: -2px; }
.e { right: -2px; }

.filters { background: #fff; border-left: 2px solid #d8d6d4; }
.filters header, .visuals header, .fields header { display: flex; align-items: center; height: 40px; color: #252423; }
header h2 { font-size: 16px; line-height: 22px; font-weight: 500; }
.filters header { padding: 0 9px 0 10px; gap: 7px; }
.eye { margin: 0 9px 0 auto; }
.filters header .plain { padding-bottom: 5px; }
.search { display: flex; align-items: center; gap: 9px; background: #fff; border: 1px solid #8a8886; border-radius: 2px; }
.search input { border: 0; padding: 0; outline: 0; min-width: 0; flex: 1; background: none; font-size: 13px; }
.search input::placeholder { color: #484644; opacity: 1; }
.filters .search { height: 31px; margin: 5px 12px 0 7px; padding: 0 10px; border-color: #a19f9d; }
.filters hr { margin: 4px 0 16px; border: 0; border-top: 1px solid #b9afaa; }
.filters section { padding: 0 9px 0 7px; margin-bottom: 26px; display: grid; gap: 7px; }
.filters h3 { display: flex; justify-content: space-between; line-height: 18px; padding-right: 3px; }
.filters h3 .plain { font-size: 16px; }
.box { height: 46px; border: 1px solid #c8c6c4; border-radius: 2px; padding: 0 8px 0 14px; font-size: 12px; line-height: 44px; white-space: nowrap; overflow: hidden; }
.box.named { line-height: 18px; padding: 4px 8px; }

.pages { grid-column: 1 / 3; display: flex; align-items: flex-start; background: #f3f2f1; border-bottom: 1px solid #e1dfdd; }
.arrow { width: 16px; height: 36px; }
.arrow + .arrow { margin: 0 1px 0 6px; }
.page { height: 36px; width: 86px; padding-top: 3px; background: #fff; color: #252423; font-weight: 500; border-left: 1px solid #aaa; border-bottom: 4px solid #117865; }
.add { width: 40px; height: 32px; margin-top: 2px; background: #117865; display: flex; align-items: center; justify-content: center; }

.visuals { width: 180px; flex: none; overflow: hidden; border-right: 1px solid #e1dfdd; }
.visuals header { justify-content: space-between; padding: 0 7px 0 8px; }
.build { padding-left: 8px; color: #252423; line-height: 13px; font-weight: 500; }
.modes { display: flex; justify-content: space-between; padding: 4px 7px 0 8px; }
.mode { width: 32px; height: 32px; display: flex; align-items: center; justify-content: center; }
.mode.on { background: #d2d0ce; border-radius: 2px; }
.notch { margin-top: 4px; }
.gallery { display: grid; grid-template-columns: repeat(6, 20px); grid-auto-rows: 20px; gap: 8px; padding: 11px 0 8px 11px; border-bottom: 1px dashed #dddbd9; margin: 0 5px 0 0; }
.gallery svg { width: 20px; height: 20px; }
.gallery .k { fill: none; stroke: #444; stroke-width: 1.5; }
.gallery .k1 { fill: none; stroke: #777; }
.gallery .w { fill: #fff; stroke: #555; stroke-width: 1.5; }
.gallery .g { fill: #c8c8c8; stroke: #777; }
.gallery .b { fill: #83bff0; stroke: #1e78c8; stroke-width: 1.5; }
.gallery .bs { fill: none; stroke: #1e88d0; stroke-width: 1.5; }
.gallery .num { font: 500 9px Roboto, sans-serif; fill: #1e88d0; text-anchor: middle; }
.letter { font: 700 16px/20px "Open Sans", sans-serif; color: #2380bd; }
.custom { display: flex; align-items: center; gap: 7px; height: 39px; padding-left: 11px; border-bottom: 1px solid #dddbd9; }
.custom .picked { padding: 2px; background: #d2d0ce; border: 1px solid #a19f9d; }
.wells { padding: 8px 5px 0; }
.wells h4 { padding: 0 7px; line-height: 18px; margin-bottom: 5px; white-space: nowrap; }
.well { height: 28px; border: 1px dashed #c8c6c4; background: #fff; padding: 0 9px; line-height: 24px; white-space: nowrap; margin-bottom: 9px; overflow: hidden; }
.well:has(.chip) { padding: 2px; }
.chip { height: 22px; border: 1px solid #c8c6c4; border-radius: 2px; background: #edebe9; display: flex; align-items: center; gap: 6px; padding: 0 4px; line-height: 20px; }
.chip span { flex: 1; }
.wells .strong { font-weight: 500; margin-bottom: 3px; }
.switch { display: flex; align-items: center; justify-content: space-between; height: 26px; padding-left: 7px; white-space: nowrap; }
.switch input { appearance: none; width: 32px; height: 16px; margin: 0; border: 1px solid #8a8886; border-radius: 8px; background: #fff; display: flex; align-items: center; padding: 0 4px; }
.switch input::after { content: ""; width: 8px; height: 8px; border-radius: 50%; background: #605e5c; }
.switch input:checked { background: #555; border-color: #555; justify-content: space-between; }
.switch input:checked::before { content: "✔"; color: #fff; font: 11px/14px "DejaVu Sans", sans-serif; }
.switch input:checked::after { background: #fff; }
.well.last { margin-top: 6px; height: 26px; padding: 0 7px; }

.fields { width: 181px; flex: none; }
.fields header { justify-content: space-between; padding: 0 8px 0 9px; }
.fields .search { height: 27px; margin: 5px 4px 9px 5px; padding: 0 7px; gap: 5px; }
.fields li { height: 24px; display: flex; align-items: center; }
.fields li label { display: flex; align-items: center; gap: 25px; padding-left: 39px; }
.fields li.table { gap: 5px; padding-left: 8px; }
.fields input[type=checkbox] { appearance: none; width: 13px; height: 13px; margin: 0; border: 1px solid #8a8886; border-radius: 2px; display: flex; justify-content: center; }
.fields input[type=checkbox]:checked { background: #117865; border-color: #117865; }
.fields input[type=checkbox]:checked::after { content: ""; width: 5px; height: 8px; border: solid #fff; border-width: 0 1px 1px 0; transform: rotate(45deg); }
.marked { position: relative; }
.badge { position: absolute; left: 7px; top: 6px; }

.status { height: 24px; flex: none; display: flex; align-items: center; justify-content: space-between; color: #605e5c; }
.count { margin-left: -4px; }
.zoom { display: flex; align-items: center; padding-right: 23px; }
.zoom input { appearance: none; width: 100px; height: 12px; margin: 0 6px 0 4px; background: linear-gradient(#666, #666) 50px 50% / 1px 6px no-repeat, linear-gradient(#888, #888) 0 50% / 100% 1px no-repeat; }
.zoom input::-webkit-slider-thumb { appearance: none; width: 4px; height: 12px; background: #444; }
.percent { margin: 0 20px 0 17px; }
.taskbar { height: 4px; flex: none; background: #1b2a41; }
.taskbar span { display: block; width: 48px; height: 4px; margin-left: 432px; background: #4c566b; }
```
